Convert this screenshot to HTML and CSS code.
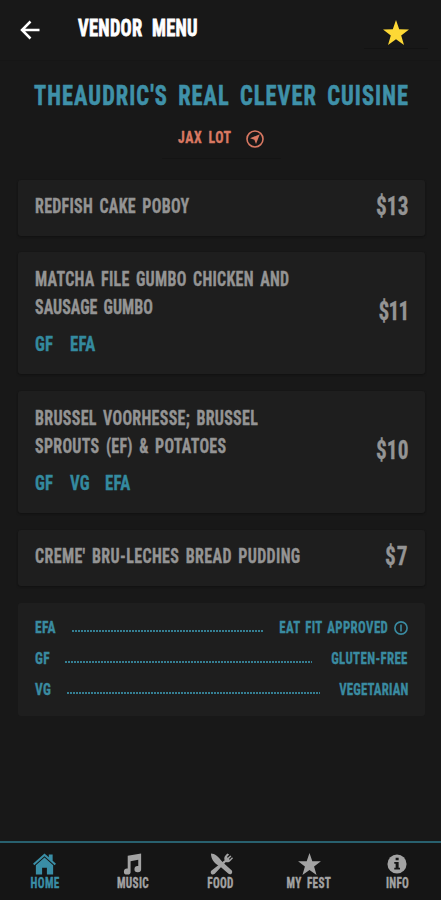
FILE: index.html
```
<!DOCTYPE html>
<html lang="en">
<head>
    <meta charset="utf-8">
    <title>Vendor Menu</title>
    <link rel="stylesheet" href="styles.css">
</head>
<body>
    <header class="top-bar">
        <svg class="back" viewBox="0 0 20 20"><path d="M19.500 10H2M10.500 1.500L2 10L10.500 18.500"/></svg>
        <span class="top-title">Vendor Menu</span>
        <span class="favorite">
            <svg viewBox="0 0 26 25"><path d="M13 0L16.200 9.300L26 9.500L18.200 15.400L21 25L13 19.300L5 25L7.800 15.400L0 9.500L9.800 9.300Z"/></svg>
        </span>
    </header>

    <main>
        <h1 class="vendor-name">Theaudric's Real Clever Cuisine</h1>
        <div class="location">
            <span class="location-name">Jax Lot</span>
            <svg class="compass" viewBox="0 0 18 18"><circle cx="9" cy="9" r="8"/><path d="M13.800 4.200L10 14L8.400 9.800L4 8.300Z"/></svg>
        </div>

        <div class="card">
            <div class="item-name">Redfish Cake Poboy</div>
            <div class="price">$13</div>
        </div>

        <div class="card tall">
            <div class="details">
                <div class="item-name">Matcha File Gumbo Chicken and<br><span class="tight">Sausage Gumbo</span></div>
                <div class="tags"><span>GF</span><span>EFA</span></div>
            </div>
            <div class="price narrow">$11</div>
        </div>

        <div class="card tall">
            <div class="details">
                <div class="item-name">Brussel Voorhesse; Brussel<br>Sprouts (EF) &amp; Potatoes</div>
                <div class="tags"><span>GF</span><span>VG</span><span>EFA</span></div>
            </div>
            <div class="price">$10</div>
        </div>

        <div class="card">
            <div class="item-name long">Creme' Bru-Leches Bread Pudding</div>
            <div class="price wide">$7</div>
        </div>

        <div class="legend">
            <div class="legend-row">
                <span class="key">EFA</span>
                <span class="dots"></span>
                <span class="meaning approved">Eat Fit Approved</span>
                <svg class="more" viewBox="0 0 14 14"><circle cx="7" cy="7" r="6.100"/><path d="M7 3.500V10.500"/></svg>
            </div>
            <div class="legend-row">
                <span class="key">GF</span>
                <span class="dots"></span>
                <span class="meaning">Gluten-Free</span>
            </div>
            <div class="legend-row">
                <span class="key">VG</span>
                <span class="dots"></span>
                <span class="meaning vegetarian">Vegetarian</span>
            </div>
        </div>
    </main>

    <nav class="tabs">
        <a class="tab active">
            <svg viewBox="0 0 24 22"><path d="M12 0L16.500 4V1H20.500V7.600L24 10.800L22.600 12.300L12 2.900L1.400 12.300L0 10.800Z"/><path d="M12 4.300L21 12.300V22H14.500V15H9.500V22H3V12.300Z"/></svg>
            <span>Home</span>
        </a>
        <a class="tab">
            <svg viewBox="0 0 24 22"><path d="M7 2.500L21 0V16A3.500 3.200 0 1 1 18 13.200V6.500L10 8V18.500A3.500 3.200 0 1 1 7 15.700Z"/></svg>
            <span>Music</span>
        </a>
        <a class="tab">
            <svg viewBox="0 0 24 22"><path d="M1 0C5 0 9 3.500 13 9L22.500 17.500C24.500 20 21.500 23 19 21L10 13C4 10.500 1 5 1 0Z"/><path d="M18 0L15.500 3C14.500 5 15 6.500 15.300 7.200L1.300 18C-.5 20.500 2.500 23.500 5 21.200L16.500 8.800C18.500 9.500 20 9 21.500 7.500L24 5L23 4L20.500 6.500L19.700 5.700L22.300 3L21.200 2L18.500 4.600L17.700 3.800L20 1Z"/></svg>
            <span>Food</span>
        </a>
        <a class="tab">
            <svg viewBox="0 0 26 25"><path d="M13 0L16.200 9.300L26 9.500L18.200 15.400L21 25L13 19.300L5 25L7.800 15.400L0 9.500L9.800 9.300Z"/></svg>
            <span class="spaced">My Fest</span>
        </a>
        <a class="tab">
            <svg class="info" viewBox="0 0 22 22"><circle cx="11" cy="11" r="10.500"/><path class="mark" d="M9.500 4H12.800V7H9.500ZM8 8.800H12.800V15H14.300V17H8V15H9.500V10.800H8Z"/></svg>
            <span>Info</span>
        </a>
    </nav>
</body>
</html>
```
FILE: styles.css
```
body {
    margin: 0;
    height: 900px;
    display: flex;
    flex-direction: column;
    overflow: hidden;
    background-color: #181818;
    color: #949494;
    font-family: Roboto, "Liberation Sans", sans-serif;
    font-stretch: 75%;
    font-weight: 700;
    text-transform: uppercase;
    white-space: nowrap;
    -webkit-text-stroke: 0.35px currentColor;
}

svg {
    display: block;
    fill: currentColor;
}

/* header */
.top-bar {
    box-sizing: border-box;
    height: 61px;
    display: flex;
    align-items: flex-start;
    padding-left: 20px;
    border-bottom: 1px solid #161616;
    color: #fff;
}

.back {
    width: 20px;
    height: 20px;
    margin-top: 20px;
    fill: none;
    stroke: #fff;
    stroke-width: 2.5;
}

.top-title {
    flex: 1;
    margin: 15px 0 0 38px;
    font-size: 23px;
    line-height: 27px;
    letter-spacing: 0.4px;
    word-spacing: 6px;
    -webkit-text-stroke-width: 0.8px;
    transform: scaleX(0.8);
    transform-origin: left;
}

.favorite {
    box-sizing: border-box;
    width: 64px;
    height: 49px;
    margin-right: 13px;
    padding: 20px 0 0 19px;
    border-bottom: 1px solid #131313;
    color: #fdd835;
}

.favorite svg {
    width: 26px;
    height: 25px;
}

main {
    flex: 1;
    padding: 0 16px 0 18px;
}

.vendor-name {
    display: flex;
    justify-content: center;
    margin: 18px 0 0;
    font-size: 28px;
    line-height: 34px;
    letter-spacing: 1.3px;
    word-spacing: 5px;
    color: #3f91a9;
    -webkit-text-stroke-width: 0.6px;
    transform: scaleX(0.8);
}

.location {
    box-sizing: border-box;
    width: 119px;
    height: 46px;
    display: flex;
    margin: 0 auto 21px;
    padding: 14px 0 0 16px;
    border-bottom: 1px solid #141414;
    color: #d97862;
}

.location-name {
    width: 67px;
    font-size: 17px;
    line-height: 20px;
    letter-spacing: 0.7px;
    word-spacing: 3px;
    transform: scaleX(0.81);
    transform-origin: left;
}

.compass {
    width: 18px;
    height: 18px;
    margin: 3px 0 0 1px;
}

.compass circle {
    fill: none;
    stroke: currentColor;
    stroke-width: 1.6;
}

/* menu items */
.card {
    box-sizing: border-box;
    height: 56px;
    display: flex;
    justify-content: space-between;
    align-items: center;
    margin-bottom: 16px;
    padding: 0 17px 4px;
    border-radius: 3px;
    background-color: #1e1e1e;
    box-shadow: 0 1px 2px #111;
}

.card.tall {
    height: 122px;
    margin-bottom: 17px;
}

.item-name {
    font-size: 20px;
    line-height: 28px;
    letter-spacing: 0.35px;
    word-spacing: 3px;
    transform: scaleX(0.8);
    transform-origin: left;
}

.tight {
    letter-spacing: 0;
}

.long {
    letter-spacing: 0.45px;
}

.tags {
    display: flex;
    margin-top: 9px;
    font-size: 20px;
    line-height: 28px;
    color: #348a9f;
}

.tags span {
    width: 35px;
    letter-spacing: 0.3px;
    transform: scaleX(0.84);
    transform-origin: left;
}

.price {
    font-size: 26px;
    line-height: 34px;
    transform: scaleX(0.82);
    transform-origin: right;
}

.narrow {
    letter-spacing: -1px;
}

.wide {
    letter-spacing: 1px;
}

/* diet legend */
.legend {
    box-sizing: border-box;
    height: 113px;
    margin-top: 17px;
    padding: 9px 17px;
    border-radius: 3px;
    background-color: #1e1e1e;
    color: #3a8ba1;
    font-size: 16px;
    letter-spacing: 0.5px;
}

.legend-row {
    height: 31px;
    display: flex;
    align-items: center;
}

.key {
    transform: scaleX(0.84);
    transform-origin: left;
}

.dots {
    flex: 1;
    height: 2px;
    margin: 6px 0 0 12px;
    background: repeating-linear-gradient(90deg, #357f93 0 2px, transparent 2px 3px);
}

.meaning {
    transform: scaleX(0.8);
    transform-origin: right;
}

.approved {
    margin-left: -11px;
    word-spacing: 2px;
}

.vegetarian {
    margin-left: 2px;
    letter-spacing: 0.2px;
}

.more {
    width: 14px;
    height: 14px;
    margin-left: 6px;
}

.more circle,
.more path {
    fill: none;
    stroke: currentColor;
    stroke-width: 1.6;
}

/* bottom tabs */
.tabs {
    box-sizing: border-box;
    height: 59px;
    display: flex;
    padding-top: 10px;
    border-top: 2px solid #28606e;
    background-color: #151515;
}

.tab {
    flex: 1;
    display: flex;
    flex-direction: column;
    align-items: center;
    padding-left: 1px;
    color: #a3a3a3;
    font-size: 14px;
    line-height: 16px;
    letter-spacing: 0.4px;
}

.tab svg {
    width: 23px;
    height: 22px;
}

.tab .info {
    width: 20px;
}

.tab span {
    transform: scaleX(0.8);
}

.spaced {
    word-spacing: 3px;
}

.mark {
    fill: #151515;
}

.active {
    color: #3a8ea6;
}
```
